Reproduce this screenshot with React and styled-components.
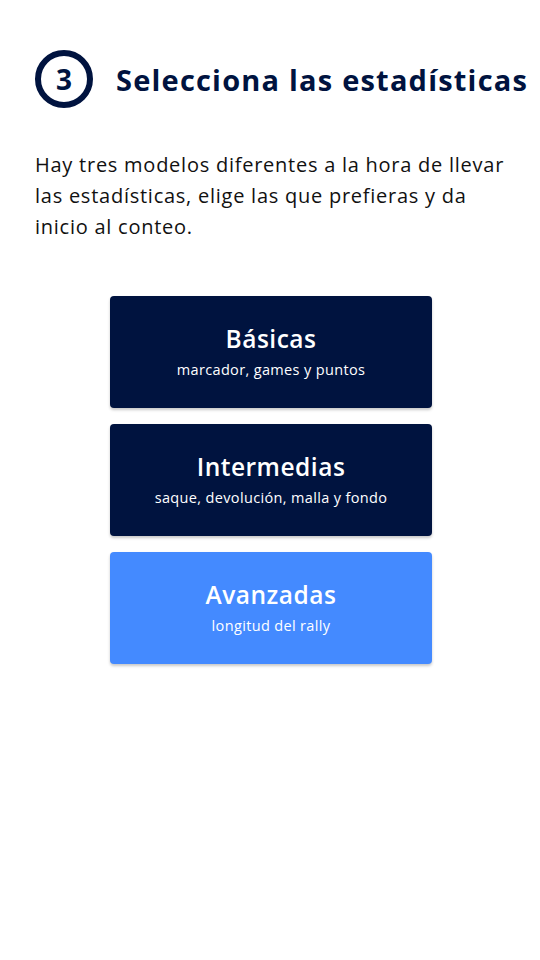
import React from "react";
import styled, { createGlobalStyle } from "styled-components";

const Global = createGlobalStyle`
  html, body { margin: 0; padding: 0; background: #fff; }
  body { font-family: "Open Sans", "Noto Sans", sans-serif; }
`;

const Page = styled.div`
  width: 540px;
  min-height: 960px;
  box-sizing: border-box;
  padding: 50px 28px 0 35px;
`;

const Header = styled.div`
  display: flex;
  align-items: center;
  gap: 23px;
`;

const StepCircle = styled.div`
  flex: 0 0 58px;
  width: 58px;
  height: 58px;
  box-sizing: border-box;
  border: 6px solid #00133f;
  border-radius: 50%;
  display: flex;
  align-items: center;
  justify-content: center;
  color: #00133f;
  font-size: 28px;
  font-weight: 700;
`;

const Title = styled.h1`
  margin: 0;
  font-size: 29px;
  font-weight: 700;
  color: #00133f;
  letter-spacing: 1.2px;
  white-space: nowrap;
`;

const Intro = styled.p`
  margin: 41px 0 0 0;
  font-size: 20px;
  line-height: 31px;
  letter-spacing: 0.75px;
  color: #111;
`;

const Options = styled.div`
  display: flex;
  flex-direction: column;
  align-items: center;
  gap: 16px;
  margin-top: 54px;
  padding-right: 5px;
`;

const Card = styled.button`
  width: 322px;
  height: 112px;
  border: none;
  border-radius: 4px;
  background: ${(p) => (p.$active ? "#448aff" : "#00133f")};
  box-shadow: 0 2px 3px rgba(0, 0, 0, 0.22);
  color: #fff;
  display: flex;
  flex-direction: column;
  align-items: center;
  justify-content: center;
  gap: 6px;
  font-family: inherit;
  padding: 0 0 2px 0;
  cursor: pointer;
`;

const CardTitle = styled.span`
  font-size: 24.5px;
  font-weight: 600;
  line-height: 32px;
  letter-spacing: 0.5px;
`;

const CardSub = styled.span`
  font-size: 14.5px;
  font-weight: 500;
  line-height: 18px;
  letter-spacing: 0.35px;
`;

const items = [
  { title: "Básicas", sub: "marcador, games y puntos" },
  { title: "Intermedias", sub: "saque, devolución, malla y fondo" },
  { title: "Avanzadas", sub: "longitud del rally", active: true },
];

export default function App() {
  return (
    <>
      <Global />
      <Page>
        <Header>
          <StepCircle>3</StepCircle>
          <Title>Selecciona las estadísticas</Title>
        </Header>
        <Intro>
          Hay tres modelos diferentes a la hora de llevar las estadísticas, elige las que prefieras y da inicio al conteo.
        </Intro>
        <Options>
          {items.map((it) => (
            <Card key={it.title} $active={it.active}>
              <CardTitle>{it.title}</CardTitle>
              <CardSub>{it.sub}</CardSub>
            </Card>
          ))}
        </Options>
      </Page>
    </>
  );
}
